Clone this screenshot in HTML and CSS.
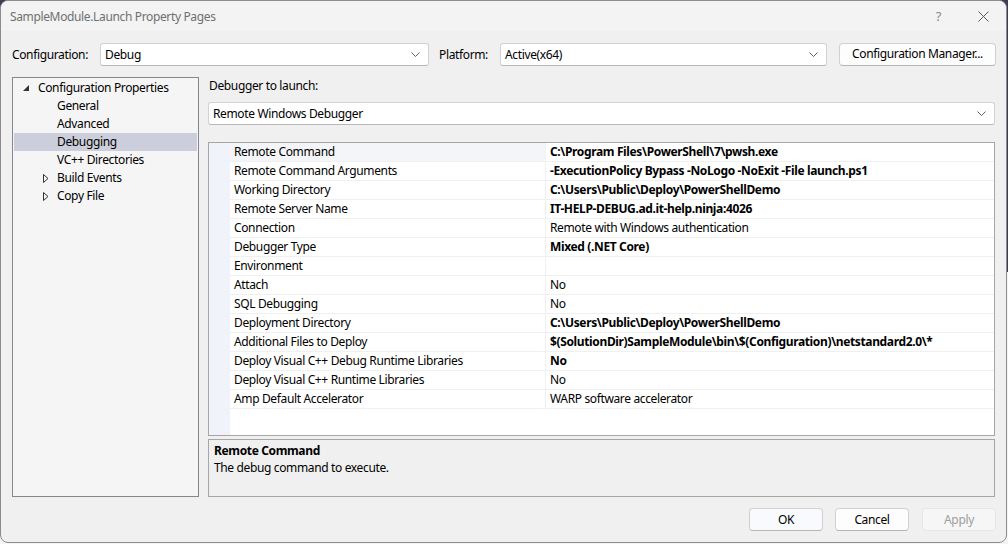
FILE: index.html
```html
<!DOCTYPE html>
<html>
<head>
<meta charset="utf-8">
<link rel="stylesheet" href="styles.css">
</head>
<body>
<div class="window">
  <div class="titlebar">
    <span class="title">SampleModule.Launch Property Pages</span>
    <div class="caption">
      <span class="help">?</span>
      <svg class="close" width="11" height="11" viewBox="0 0 11 11"><path d="M0.5 0.5 L10.5 10.5 M10.5 0.5 L0.5 10.5" stroke="#5a5a5a" stroke-width="1" fill="none"/></svg>
    </div>
  </div>
  <div class="toolbar">
    <span class="lbl lbl-config">Configuration:</span>
    <div class="combo combo-config"><span>Debug</span><svg class="chev" width="9" height="5" viewBox="0 0 9 5"><path d="M0.5 0.5 L4.5 4.5 L8.5 0.5" stroke="#606060" fill="none"/></svg></div>
    <span class="lbl lbl-platform">Platform:</span>
    <div class="combo combo-platform"><span>Active(x64)</span><svg class="chev" width="9" height="5" viewBox="0 0 9 5"><path d="M0.5 0.5 L4.5 4.5 L8.5 0.5" stroke="#606060" fill="none"/></svg></div>
    <button class="btn btn-manager">Configuration Manager...</button>
  </div>
  <div class="main">
    <div class="tree">
      <div class="node root"><svg class="exp" width="7" height="7" viewBox="0 0 7 7"><polygon points="6,0 6,6 0,6" fill="#333"/></svg><span>Configuration Properties</span></div>
      <div class="node child">General</div>
      <div class="node child">Advanced</div>
      <div class="node child selected">Debugging</div>
      <div class="node child">VC++ Directories</div>
      <div class="node child col"><svg class="colx" width="6" height="9" viewBox="0 0 6 9"><polygon points="0.5,0.5 5,4.5 0.5,8.5" fill="none" stroke="#333"/></svg><span>Build Events</span></div>
      <div class="node child col"><svg class="colx" width="6" height="9" viewBox="0 0 6 9"><polygon points="0.5,0.5 5,4.5 0.5,8.5" fill="none" stroke="#333"/></svg><span>Copy File</span></div>
    </div>
    <div class="right">
      <div class="lbl-debugger">Debugger to launch:</div>
      <div class="combo combo-debugger"><span>Remote Windows Debugger</span><svg class="chev" width="9" height="5" viewBox="0 0 9 5"><path d="M0.5 0.5 L4.5 4.5 L8.5 0.5" stroke="#606060" fill="none"/></svg></div>
      <div class="grid">
        <div class="row first"><div class="mg"></div><div class="name">Remote Command</div><div class="val b">C:\Program Files\PowerShell\7\pwsh.exe</div></div>
        <div class="row"><div class="mg"></div><div class="name">Remote Command Arguments</div><div class="val b">-ExecutionPolicy Bypass -NoLogo -NoExit -File launch.ps1</div></div>
        <div class="row"><div class="mg"></div><div class="name">Working Directory</div><div class="val b">C:\Users\Public\Deploy\PowerShellDemo</div></div>
        <div class="row"><div class="mg"></div><div class="name">Remote Server Name</div><div class="val b">IT-HELP-DEBUG.ad.it-help.ninja:4026</div></div>
        <div class="row"><div class="mg"></div><div class="name">Connection</div><div class="val">Remote with Windows authentication</div></div>
        <div class="row"><div class="mg"></div><div class="name">Debugger Type</div><div class="val b">Mixed (.NET Core)</div></div>
        <div class="row"><div class="mg"></div><div class="name">Environment</div><div class="val"></div></div>
        <div class="row"><div class="mg"></div><div class="name">Attach</div><div class="val">No</div></div>
        <div class="row"><div class="mg"></div><div class="name">SQL Debugging</div><div class="val">No</div></div>
        <div class="row"><div class="mg"></div><div class="name">Deployment Directory</div><div class="val b">C:\Users\Public\Deploy\PowerShellDemo</div></div>
        <div class="row"><div class="mg"></div><div class="name">Additional Files to Deploy</div><div class="val b">$(SolutionDir)SampleModule\bin\$(Configuration)\netstandard2.0\*</div></div>
        <div class="row"><div class="mg"></div><div class="name">Deploy Visual C++ Debug Runtime Libraries</div><div class="val b">No</div></div>
        <div class="row"><div class="mg"></div><div class="name">Deploy Visual C++ Runtime Libraries</div><div class="val">No</div></div>
        <div class="row"><div class="mg"></div><div class="name">Amp Default Accelerator</div><div class="val">WARP software accelerator</div></div>
        <div class="filler"><div class="mg"></div><div class="rest"></div></div>
      </div>
      <div class="desc">
        <div class="desc-title">Remote Command</div>
        <div class="desc-text">The debug command to execute.</div>
      </div>
    </div>
  </div>
  <div class="footer">
    <button class="btn btn-ok">OK</button>
    <button class="btn btn-cancel">Cancel</button>
    <button class="btn btn-apply" disabled>Apply</button>
  </div>
</div>
</body>
</html>
```
FILE: styles.css
```css
* { box-sizing: border-box; }
html, body { margin: 0; padding: 0; }
body {
  width: 1008px;
  height: 544px;
  overflow: hidden;
  background: linear-gradient(#3b3e52 0%, #3b3e52 50%, #f4f4f4 50%, #f4f4f4 100%);
  font-family: "Noto Sans", "Open Sans", sans-serif;
  font-size: 12px;
  letter-spacing: -0.36px;
  color: #000;
}
.window {
  width: 1007px;
  height: 543px;
  background: #f0f0f0;
  border: 1px solid #8c8c8c;
  border-radius: 8px;
  overflow: hidden;
  display: flex;
  flex-direction: column;
}
.titlebar {
  height: 30px;
  background: #f3f3f3;
  display: flex;
  align-items: center;
  padding-left: 9px;
  flex-shrink: 0;
}
.title { color: #707070; line-height: 16px; margin-top: 1px; }
.caption { margin-left: auto; display: flex; align-items: center; }
.help { color: #8a8a8a; font-size: 13px; margin-right: 37px; }
.close { margin-right: 17px; }
.toolbar {
  display: flex;
  align-items: center;
  padding: 12px 0 0 11px;
  height: 35px;
  flex-shrink: 0;
}
.lbl { line-height: 16px; }
.lbl-config { width: 88px; }
.lbl-platform { margin-left: 10px; width: 61px; }
.combo {
  height: 23px;
  background: #fff;
  border: 1px solid #d2d2d2;
  border-bottom-color: #b8b8b8;
  border-radius: 3px;
  display: flex;
  align-items: center;
  padding: 0 6px 0 4px;
  line-height: 16px;
}
.combo span { flex: 1; }
.chev { margin-right: 2px; }
.combo-config { width: 329px; }
.combo-platform { width: 327px; }
.btn {
  font-family: inherit;
  font-size: 12px;
  letter-spacing: -0.36px;
  height: 23px;
  background: #fdfdfd;
  border: 1px solid #d0d0d0;
  border-bottom-color: #b5b5b5;
  border-radius: 4px;
  color: #000;
  padding: 0;
  line-height: 16px;
}
.btn-manager { margin-left: 12px; width: 157px; margin-top: -1px; }
.main {
  display: flex;
  padding: 11px 0 0 11px;
  height: 431px;
  flex-shrink: 0;
}
.tree {
  width: 187px;
  height: 420px;
  background: #f5f5f5;
  border: 1px solid #828790;
  padding-top: 1px;
}
.node {
  height: 18px;
  line-height: 18px;
  display: flex;
  align-items: center;
  white-space: nowrap;
}
.root { padding-left: 10px; }
.root .exp { margin-right: 8px; margin-top: 0; }
.child { padding-left: 44px; }
.child.col { padding-left: 30px; }
.col .colx { margin-right: 8px; }
.selected { background: #cccedb; margin: 0 1px; padding-left: 43px; }
.right {
  margin-left: 9px;
  width: 788px;
  display: flex;
  flex-direction: column;
}
.lbl-debugger { line-height: 18px; height: 25px; padding-left: 1px; }
.combo-debugger { width: 787px; }
.grid {
  margin-top: 17px;
  width: 787px;
  height: 294px;
  border: 1px solid #a6a6a6;
  background: #fff;
  display: flex;
  flex-direction: column;
}
.row {
  display: grid;
  grid-template-columns: 21px 316px 1fr;
  height: 19px;
}
.mg { background: #f0f3fa; }
.name, .val {
  line-height: 18px;
  border-bottom: 1px solid #f0f0f0;
  white-space: nowrap;
  overflow: hidden;
}
.name { padding-left: 4px; border-right: 1px solid #f0f0f0; }
.val { padding-left: 4px; }
.first .name { background: #f4f5f8; }
.b { font-weight: bold; }
.filler { flex: 1; display: grid; grid-template-columns: 21px 1fr; }
.desc {
  margin-top: 3px;
  width: 787px;
  height: 58px;
  border: 1px solid #a6a6a6;
  background: #f0f0f0;
  padding: 2px 5px;
}
.desc-title { font-weight: bold; line-height: 17px; }
.desc-text { line-height: 17px; }
.footer {
  display: flex;
  justify-content: flex-end;
  padding: 11px 10px 0 0;
}
.btn-ok, .btn-cancel, .btn-apply { width: 74px; }
.btn-cancel { margin-left: 12px; }
.btn-apply { margin-left: 13px; }
.btn-ok { background: #f8fafd; }
.btn-apply {
  color: #9e9e9e;
  background: #f6f6f6;
  border-color: #e6e6e6;
}
```
